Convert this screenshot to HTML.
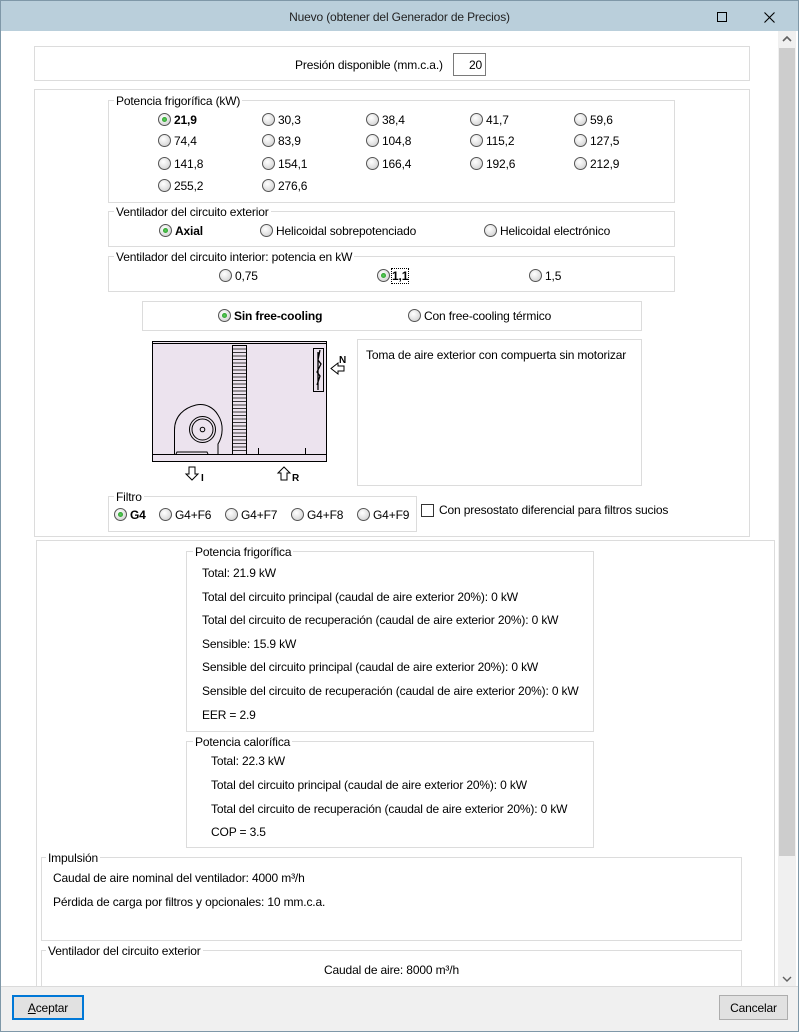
<!DOCTYPE html>
<html><head><meta charset="utf-8"><style>
*{box-sizing:border-box;margin:0;padding:0}
body{width:799px;height:1032px;position:relative;background:#fff;font-family:"Liberation Sans",sans-serif;font-size:12px;color:#000;overflow:hidden;letter-spacing:-0.15px}
.a{position:absolute}
.t{position:absolute;white-space:nowrap;line-height:14px}
.box{position:absolute;border:1px solid #dcdcdc}
.leg{position:absolute;background:#fff;padding:0 2px;line-height:14px;white-space:nowrap}
.r{position:absolute;width:13px;height:13px;border-radius:50%;border:1px solid #555;background:radial-gradient(circle at 40% 35%,#fff 0,#e8e8e8 45%,#c8c8c8 100%)}
.r.on::after{content:"";position:absolute;left:3px;top:3px;width:5px;height:5px;border-radius:50%;background:radial-gradient(circle,#5fd35f,#1a8a1a)}
.rl{position:absolute;white-space:nowrap;line-height:14px}
b{font-weight:bold}
</style></head><body>
<div class="a" style="left:0;top:0;width:799px;height:1032px;border:1px solid #7f98a8"></div>
<div class="a" style="left:1px;top:1px;width:797px;height:30px;background:#bacfdb"></div>
<div class="t" style="left:0;width:799px;top:10px;text-align:center;font-size:12px;color:#222">Nuevo (obtener del Generador de Precios)</div>
<div class="a" style="left:717px;top:12px;width:10px;height:10px;border:1px solid #000"></div>
<svg class="a" style="left:764px;top:12px" width="11" height="11"><path d="M0.5 0.5L10.5 10.5M10.5 0.5L0.5 10.5" stroke="#000" stroke-width="1.1"/></svg>

<div class="a" style="left:778px;top:31px;width:18px;height:955px;background:#f0f0f0"></div>
<div class="a" style="left:779px;top:48px;width:16px;height:808px;background:#cdcdcd"></div>
<svg class="a" style="left:782px;top:35px" width="10" height="8"><path d="M1 6L5 2L9 6" stroke="#606060" stroke-width="1.6" fill="none"/></svg>
<svg class="a" style="left:782px;top:975px" width="10" height="8"><path d="M1 2L5 6L9 2" stroke="#606060" stroke-width="1.4" fill="none"/></svg>

<div class="box" style="left:34px;top:46px;width:716px;height:35px"></div>
<div class="t" style="left:295px;top:58px">Presión disponible (mm.c.a.)</div>
<div class="a" style="left:453px;top:53px;width:33px;height:23px;border:1px solid #7a7a7a"></div>
<div class="t" style="left:453px;width:29px;text-align:right;top:58px">20</div>

<div class="box" style="left:34px;top:89px;width:716px;height:448px"></div>

<div class="box" style="left:108px;top:100px;width:567px;height:103px"></div>
<div class="leg" style="left:114px;top:94px">Potencia frigorífica (kW)</div>
<div class="r on" style="left:158px;top:113px"></div><div class="rl" style="left:174px;top:113px"><b>21,9</b></div>
<div class="r" style="left:262px;top:113px"></div><div class="rl" style="left:278px;top:113px">30,3</div>
<div class="r" style="left:366px;top:113px"></div><div class="rl" style="left:382px;top:113px">38,4</div>
<div class="r" style="left:470px;top:113px"></div><div class="rl" style="left:486px;top:113px">41,7</div>
<div class="r" style="left:574px;top:113px"></div><div class="rl" style="left:590px;top:113px">59,6</div>
<div class="r" style="left:158px;top:134px"></div><div class="rl" style="left:174px;top:134px">74,4</div>
<div class="r" style="left:262px;top:134px"></div><div class="rl" style="left:278px;top:134px">83,9</div>
<div class="r" style="left:366px;top:134px"></div><div class="rl" style="left:382px;top:134px">104,8</div>
<div class="r" style="left:470px;top:134px"></div><div class="rl" style="left:486px;top:134px">115,2</div>
<div class="r" style="left:574px;top:134px"></div><div class="rl" style="left:590px;top:134px">127,5</div>
<div class="r" style="left:158px;top:157px"></div><div class="rl" style="left:174px;top:157px">141,8</div>
<div class="r" style="left:262px;top:157px"></div><div class="rl" style="left:278px;top:157px">154,1</div>
<div class="r" style="left:366px;top:157px"></div><div class="rl" style="left:382px;top:157px">166,4</div>
<div class="r" style="left:470px;top:157px"></div><div class="rl" style="left:486px;top:157px">192,6</div>
<div class="r" style="left:574px;top:157px"></div><div class="rl" style="left:590px;top:157px">212,9</div>
<div class="r" style="left:158px;top:179px"></div><div class="rl" style="left:174px;top:179px">255,2</div>
<div class="r" style="left:262px;top:179px"></div><div class="rl" style="left:278px;top:179px">276,6</div>

<div class="box" style="left:108px;top:211px;width:567px;height:36px"></div>
<div class="leg" style="left:114px;top:205px">Ventilador del circuito exterior</div>
<div class="r on" style="left:159px;top:224px"></div><div class="rl" style="left:175px;top:224px"><b>Axial</b></div>
<div class="r" style="left:260px;top:224px"></div><div class="rl" style="left:276px;top:224px">Helicoidal sobrepotenciado</div>
<div class="r" style="left:484px;top:224px"></div><div class="rl" style="left:500px;top:224px">Helicoidal electrónico</div>

<div class="box" style="left:108px;top:256px;width:567px;height:36px"></div>
<div class="leg" style="left:114px;top:250px">Ventilador del circuito interior: potencia en kW</div>
<div class="r" style="left:219px;top:269px"></div><div class="rl" style="left:235px;top:269px">0,75</div>
<div class="r on" style="left:377px;top:269px"></div><div class="rl" style="left:392px;top:269px;outline:1px dotted #000"><b>1,1</b></div>
<div class="r" style="left:529px;top:269px"></div><div class="rl" style="left:545px;top:269px">1,5</div>

<div class="box" style="left:142px;top:301px;width:500px;height:30px"></div>
<div class="r on" style="left:218px;top:309px"></div><div class="rl" style="left:234px;top:309px"><b>Sin free-cooling</b></div>
<div class="r" style="left:408px;top:309px"></div><div class="rl" style="left:424px;top:309px">Con free-cooling térmico</div>

<svg class="a" style="left:140px;top:330px" width="220" height="160" viewBox="0 0 220 160">
<rect x="12.5" y="11.5" width="174" height="120" fill="#ece3ee" stroke="#000"/>
<line x1="12.5" y1="13.5" x2="186.5" y2="13.5" stroke="#000"/>
<line x1="12.5" y1="124.5" x2="186.5" y2="124.5" stroke="#000"/>
<rect x="92.5" y="15.5" width="14" height="109" fill="#ece3ee" stroke="#000"/>
<path d="M92.5 19H106.5M92.5 22.5H106.5M92.5 26H106.5M92.5 29.5H106.5M92.5 33H106.5M92.5 36.5H106.5M92.5 40H106.5M92.5 43.5H106.5M92.5 47H106.5M92.5 50.5H106.5M92.5 54H106.5M92.5 57.5H106.5M92.5 61H106.5M92.5 64.5H106.5M92.5 68H106.5M92.5 71.5H106.5M92.5 75H106.5M92.5 78.5H106.5M92.5 82H106.5M92.5 85.5H106.5M92.5 89H106.5M92.5 92.5H106.5M92.5 96H106.5M92.5 99.5H106.5M92.5 103H106.5M92.5 106.5H106.5M92.5 110H106.5M92.5 113.5H106.5M92.5 117H106.5M92.5 120.5H106.5" stroke="#000" stroke-width="0.8"/>
<rect x="173.5" y="18.5" width="10" height="43" fill="#ece3ee" stroke="#000"/>
<path d="M180 20L178 30L181 34L177 42L180 46L177 55M178 60V22" stroke="#000" stroke-width="1.3" fill="none"/>
<path d="M34.5 124V100C34.5 86 44 78 56 75C66 73 74 78 78 85C84 94 83 106 78 114V124" stroke="#000" fill="none"/>
<path d="M36 124L37 122H67L68 124" stroke="#000" fill="none"/>
<circle cx="62.5" cy="99.5" r="13" stroke="#000" fill="none"/>
<circle cx="62.5" cy="99.5" r="10.5" stroke="#000" fill="none"/>
<circle cx="62.5" cy="99.5" r="2.3" stroke="#000" fill="none"/>
<path d="M118.5 118V124M165.5 118V124" stroke="#000"/>
<path d="M204 36H198V33L191 38.5L198 44V41H204Z" stroke="#000" fill="#fff"/>
<text x="199" y="33" font-family="Liberation Sans" font-weight="bold" font-size="10">N</text>
<path d="M49 137V144H46L52 150L58 144H55V137Z" stroke="#000" fill="#fff"/>
<text x="61" y="151" font-family="Liberation Sans" font-weight="bold" font-size="10">I</text>
<path d="M141 150V143H138L144 137L150 143H147V150Z" stroke="#000" fill="#fff"/>
<text x="152" y="151" font-family="Liberation Sans" font-weight="bold" font-size="10">R</text>
</svg>
<div class="box" style="left:357px;top:339px;width:285px;height:147px"></div>
<div class="t" style="left:366px;top:348px">Toma de aire exterior con compuerta sin motorizar</div>

<div class="box" style="left:108px;top:496px;width:309px;height:36px"></div>
<div class="leg" style="left:114px;top:490px">Filtro</div>
<div class="r on" style="left:114px;top:508px"></div><div class="rl" style="left:130px;top:508px"><b>G4</b></div>
<div class="r" style="left:159px;top:508px"></div><div class="rl" style="left:175px;top:508px">G4+F6</div>
<div class="r" style="left:225px;top:508px"></div><div class="rl" style="left:241px;top:508px">G4+F7</div>
<div class="r" style="left:291px;top:508px"></div><div class="rl" style="left:307px;top:508px">G4+F8</div>
<div class="r" style="left:357px;top:508px"></div><div class="rl" style="left:373px;top:508px">G4+F9</div>
<div class="a" style="left:421px;top:504px;width:13px;height:13px;border:1px solid #333"></div>
<div class="rl" style="left:439px;top:503px">Con presostato diferencial para filtros sucios</div>

<div class="box" style="left:36px;top:540px;width:739px;height:460px"></div>

<div class="box" style="left:186px;top:551px;width:408px;height:181px"></div>
<div class="leg" style="left:193px;top:545px">Potencia frigorífica</div>
<div class="t" style="left:202px;top:566px">Total: 21.9 kW</div>
<div class="t" style="left:202px;top:590px">Total del circuito principal (caudal de aire exterior 20%): 0 kW</div>
<div class="t" style="left:202px;top:613px">Total del circuito de recuperación (caudal de aire exterior 20%): 0 kW</div>
<div class="t" style="left:202px;top:637px">Sensible: 15.9 kW</div>
<div class="t" style="left:202px;top:660px">Sensible del circuito principal (caudal de aire exterior 20%): 0 kW</div>
<div class="t" style="left:202px;top:684px">Sensible del circuito de recuperación (caudal de aire exterior 20%): 0 kW</div>
<div class="t" style="left:202px;top:708px">EER = 2.9</div>

<div class="box" style="left:186px;top:741px;width:408px;height:107px"></div>
<div class="leg" style="left:193px;top:735px">Potencia calorífica</div>
<div class="t" style="left:211px;top:754px">Total: 22.3 kW</div>
<div class="t" style="left:211px;top:778px">Total del circuito principal (caudal de aire exterior 20%): 0 kW</div>
<div class="t" style="left:211px;top:802px">Total del circuito de recuperación (caudal de aire exterior 20%): 0 kW</div>
<div class="t" style="left:211px;top:825px">COP = 3.5</div>

<div class="box" style="left:41px;top:857px;width:701px;height:84px"></div>
<div class="leg" style="left:46px;top:851px">Impulsión</div>
<div class="t" style="left:53px;top:871px">Caudal de aire nominal del ventilador: 4000 m³/h</div>
<div class="t" style="left:53px;top:895px">Pérdida de carga por filtros y opcionales: 10 mm.c.a.</div>

<div class="box" style="left:41px;top:950px;width:701px;height:60px"></div>
<div class="leg" style="left:46px;top:944px">Ventilador del circuito exterior</div>
<div class="t" style="left:41px;width:701px;text-align:center;top:963px">Caudal de aire: 8000 m³/h</div>

<div class="a" style="left:1px;top:986px;width:797px;height:45px;background:#f0f0f0;border-top:1px solid #dadada"></div>
<div class="a" style="left:12px;top:995px;width:72px;height:25px;border:2px solid #0078d7;background:#e1e1e1"></div>
<div class="t" style="left:12px;width:72px;text-align:center;top:1001px"><u>A</u>ceptar</div>
<div class="a" style="left:719px;top:995px;width:69px;height:25px;border:1px solid #adadad;background:#e1e1e1"></div>
<div class="t" style="left:719px;width:69px;text-align:center;top:1001px">Cancelar</div>
</body></html>
